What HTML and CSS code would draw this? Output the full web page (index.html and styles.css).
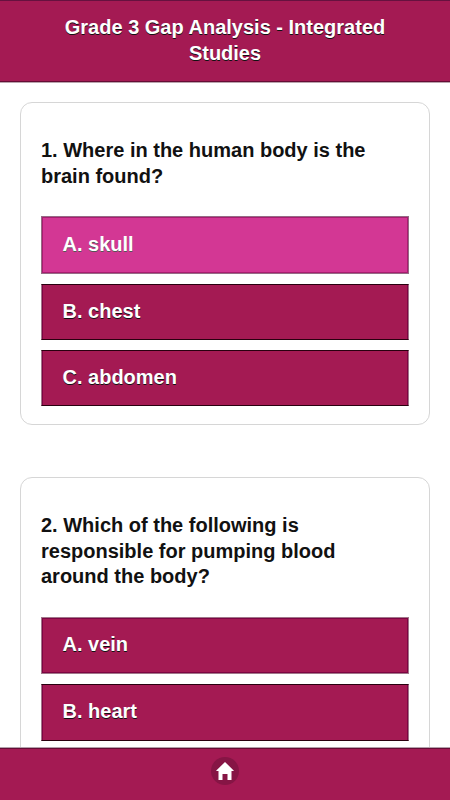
FILE: index.html
```
<!DOCTYPE html>
<html lang="en">
<head>
<meta charset="utf-8">
<title>Grade 3 Gap Analysis - Integrated Studies</title>
<link rel="stylesheet" href="styles.css">
</head>
<body>
<div class="page">
  <header class="header"><h1>Grade 3 Gap Analysis - Integrated Studies</h1></header>
  <main class="content">
    <section class="card">
      <h2>1. Where in the human body is the brain found?</h2>
      <div class="options">
        <a class="option selected">A. skull</a>
        <a class="option crisp">B. chest</a>
        <a class="option crisp">C. abdomen</a>
      </div>
    </section>
    <section class="card">
      <h2>2. Which of the following is responsible for pumping blood around the body?</h2>
      <div class="options">
        <a class="option soft">A. vein</a>
        <a class="option crisp tall">B. heart</a>
      </div>
    </section>
  </main>
  <footer class="footer">
    <a class="home" aria-label="Home"><svg width="18" height="18" viewBox="0 0 18 18"><path d="M9 0 .3 8.5V9H2.5v9h4v-6h5v6h4V9h2.2v-.5z" fill="#fff"/></svg></a>
  </footer>
</div>
</body>
</html>
```
FILE: styles.css
```
* { box-sizing: border-box; }
body { margin: 0; background: #fff; font-family: "Liberation Sans", Arial, sans-serif; }
.page { height: 800px; display: flex; flex-direction: column; overflow: hidden; }
.header {
  flex: none;
  height: 83px;
  padding: 13px 60px 0;
  background: #a41a53;
  border-top: 1px solid #66113f;
  border-bottom: 1px solid #b9a5ad;
  box-shadow: inset 0 -1px #650c35;
}
h1, h2 { margin: 0; font-weight: 700; font-size: 20px; }
h1 { line-height: 26px; text-align: center; color: #fff; text-shadow: 0 1px 0 #111; }
.content { flex: 1; min-height: 0; overflow: hidden; padding: 19px 20px 0; }
.card {
  height: 323px;
  padding: 35px 20px 0;
  border: 1px solid #d6d6d6;
  border-radius: 12px;
}
.card + .card { height: 400px; margin-top: 52px; }
h2 { line-height: 25.5px; color: #111; padding-right: 10px; }
.options { display: flex; flex-direction: column; gap: 10px; margin-top: 27px; }
.option {
  display: flex;
  align-items: center;
  height: 56px;
  padding: 0 20.5px 2px;
  color: #fff;
  background: #a41a53;
  font-size: 20px;
  font-weight: 700;
  text-shadow: 0 1px 0 #111;
  border: 1px solid #a1788a;
  box-shadow: inset 0 0 0 1px #7d0543;
}
.selected { height: 58px; background: #d33794; border-color: #956c85; box-shadow: inset 0 0 0 1px #a81d70; text-shadow: 0 1px 0 #555; }
.crisp { border-top-color: #29000f; border-bottom-color: #29000f; box-shadow: inset 1px 0 #7d0543, inset -1px 0 #7d0543; }
.soft { height: 57px; }
.tall { height: 57px; padding-bottom: 1px; }
.footer {
  flex: none;
  height: 53px;
  display: flex;
  justify-content: center;
  padding-top: 9px;
  background: #a41a53;
  border-top: 1px solid #b3a1ab;
  box-shadow: inset 0 1px #650c35;
}
.home { display: flex; width: 28px; height: 28px; align-items: center; justify-content: center; border-radius: 50%; background: #861545; }
```
